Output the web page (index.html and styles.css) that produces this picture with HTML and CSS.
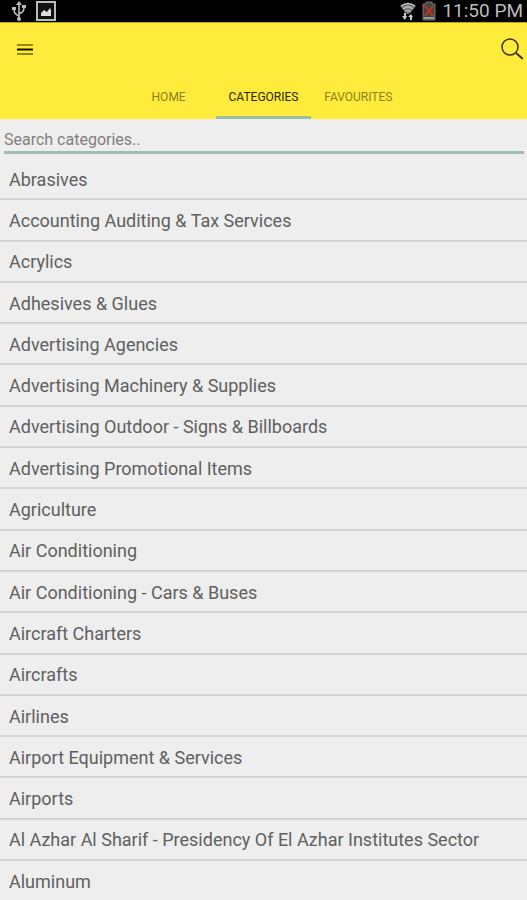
FILE: index.html
```html
<!DOCTYPE html>
<html lang="en">
<head>
    <meta charset="UTF-8">
    <meta name="viewport" content="width=device-width, initial-scale=1.0">
    <title>Categories</title>
    <link rel="stylesheet" href="styles.css">
</head>
<body>
    <div class="status-bar">
        <div class="status-group">
            <svg class="usb" width="16" height="20" viewBox="0 0 16 20" fill="none" stroke="#bbb" stroke-width="1.6">
                <path d="M8 3v14M8 15C4 13 3 12 3 8M8 13c4-2 5-3 5-7"/>
                <path d="M8 0l3 4H5zM1 6h4v3H1zM11 4h4v3h-4z" fill="#bbb" stroke="none"/>
                <circle cx="8" cy="18" r="2" fill="#bbb" stroke="none"/>
            </svg>
            <svg width="20" height="22" viewBox="0 0 20 22">
                <rect x="1" y="2" width="18" height="18" fill="#111" stroke="#bbb" stroke-width="2"/>
                <path d="M5 16v-3l3-3 3 2 3-4 1 2v6z" fill="#ddd"/>
            </svg>
        </div>
        <div class="status-group">
            <svg width="16" height="20" viewBox="0 0 16 20">
                <path d="M0 5q8-6 16 0l-7 8H7z" fill="#777"/>
                <path d="M1 5q7-5 14 0M3 8q5-4 10 0M5 11q3-3 6 0" fill="none" stroke="#bbb" stroke-width="1.5"/>
                <path d="M4 12v3H2l3 4 2-4H6v-3zM10 19v-3H8l3-3 2 3h-1v3z" fill="#ccc"/>
            </svg>
            <svg width="14" height="20" viewBox="0 0 14 20">
                <path d="M4 1h6v2h3v16H1V3h3z" fill="#444" stroke="#777"/>
                <path d="M2 16h10v2H2z" fill="#999"/>
                <path d="M3 5l8 10M11 5L3 15" stroke="#c7351c" stroke-width="2"/>
            </svg>
            <span class="clock">11:50 PM</span>
        </div>
    </div>

    <header class="header">
        <div class="toolbar">
            <button class="icon-btn" aria-label="Menu">
                <svg width="16" height="13" viewBox="0 0 16 13">
                    <path d="M0 2h16M0 11h16" stroke="#968816" stroke-width="2"/>
                    <path d="M0 6.500h16" stroke="#151300" stroke-width="2"/>
                </svg>
            </button>
            <button class="icon-btn" aria-label="Search">
                <svg width="22" height="22" viewBox="0 0 22 22" fill="none" stroke="#37320a">
                    <circle cx="9" cy="9" r="8" stroke-width="1.500"/>
                    <path d="M15 15l7 6" stroke-width="2"/>
                </svg>
            </button>
        </div>
        <nav class="tabs">
            <a class="tab" href="#home">HOME</a>
            <a class="tab active" href="#categories">CATEGORIES</a>
            <a class="tab" href="#favourites">FAVOURITES</a>
        </nav>
    </header>

    <main class="content">
        <div class="search">
            <input type="text" class="search-input" placeholder="Search categories.." aria-label="Search categories">
        </div>
        <ul class="list">
            <li class="item">Abrasives</li>
            <li class="item">Accounting Auditing &amp; Tax Services</li>
            <li class="item">Acrylics</li>
            <li class="item">Adhesives &amp; Glues</li>
            <li class="item">Advertising Agencies</li>
            <li class="item">Advertising Machinery &amp; Supplies</li>
            <li class="item">Advertising Outdoor - Signs &amp; Billboards</li>
            <li class="item">Advertising Promotional Items</li>
            <li class="item">Agriculture</li>
            <li class="item">Air Conditioning</li>
            <li class="item">Air Conditioning - Cars &amp; Buses</li>
            <li class="item">Aircraft Charters</li>
            <li class="item">Aircrafts</li>
            <li class="item">Airlines</li>
            <li class="item">Airport Equipment &amp; Services</li>
            <li class="item">Airports</li>
            <li class="item">Al Azhar Al Sharif - Presidency Of El Azhar Institutes Sector</li>
            <li class="item">Aluminum</li>
        </ul>
    </main>
</body>
</html>
```
FILE: styles.css
```css
* {
    box-sizing: border-box;
}

body {
    display: flex;
    flex-direction: column;
    min-height: 100vh;
    margin: 0;
    background: #eee;
    color: #606060;
    font-family: Roboto, sans-serif;
}

.status-bar {
    display: flex;
    justify-content: space-between;
    height: 22px;
    padding: 0 4px 0 11px;
    background: #000;
    color: #bbb;
}

.status-group {
    display: flex;
    align-items: center;
    gap: 6px;
}

.usb {
    margin-right: 3px;
}

.clock {
    font-size: 19px;
    line-height: 22px;
}

.header {
    background: #ffeb3b;
    border-top: 1px solid #b5a416;
}

.toolbar {
    display: flex;
    justify-content: space-between;
    align-items: center;
    height: 52px;
    padding: 0 4px 0 17px;
}

.icon-btn {
    display: flex;
    padding: 0;
    border: none;
    background: none;
    cursor: pointer;
}

.tabs {
    display: flex;
    justify-content: center;
}

.tab {
    width: 18%;
    height: 44px;
    border-bottom: 3px solid transparent;
    color: #8c8020;
    font-size: 12px;
    line-height: 44px;
    text-align: center;
    text-decoration: none;
}

.tab.active {
    border-bottom-color: #9dbfa0;
    color: #2b2700;
}

.content {
    display: flex;
    flex: 1;
    flex-direction: column;
}

.search {
    padding: 8px 3px 5px 4px;
}

.search-input {
    display: block;
    width: 100%;
    height: 27px;
    padding: 0;
    border: none;
    border-bottom: 3px solid #9fbfb5;
    outline: none;
    background: none;
    color: #606060;
    font-family: inherit;
    font-size: 16px;
}

.search-input::placeholder {
    color: #808080;
}

.list {
    display: flex;
    flex: 1;
    flex-direction: column;
    margin: 0;
    padding: 0;
    list-style: none;
}

.item {
    display: flex;
    flex: 1 0 41px;
    align-items: center;
    padding: 2px 9px 0;
    border-bottom: 2px solid #d4d4d4;
    font-size: 18px;
    line-height: 24px;
}

.item:last-child {
    flex: 0 0 39px;
    border-bottom: none;
}
```
